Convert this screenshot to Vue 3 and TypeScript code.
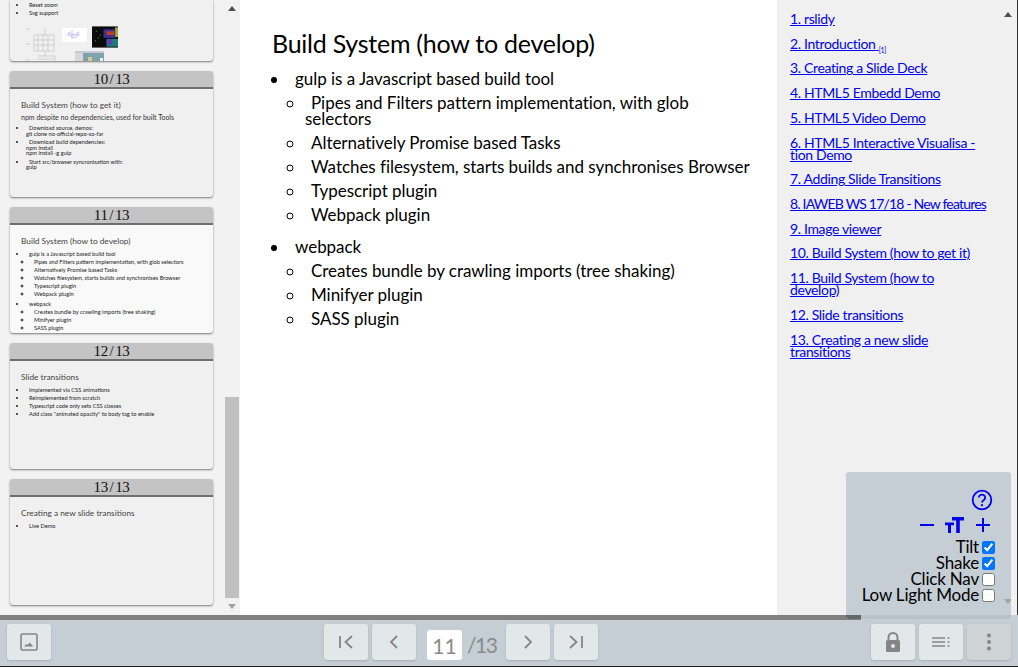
<script setup lang="ts">
const pct = (11 / 13) * 100
const toc = [
  { n: '1. rslidy' },
  { n: '2. Introduction', sup: true },
  { n: '3. Creating a Slide Deck' },
  { n: '4. HTML5 Embedd Demo' },
  { n: '5. HTML5 Video Demo' },
  { n: '6. HTML5 Interactive Visualisa - tion Demo' },
  { n: '7. Adding Slide Transitions' },
  { n: '8. IAWEB WS 17/18 - New features', cls: 'tight-link' },
  { n: '9. Image viewer' },
  { n: '10. Build System (how to get it)' },
  { n: '11. Build System (how to develop)', cls: 'short-link' },
  { n: '12. Slide transitions' },
  { n: '13. Creating a new slide transitions', cls: 'short-link' },
]
const opts = [
  { label: 'Tilt', on: true },
  { label: 'Shake', on: true },
  { label: 'Click Nav', on: false },
  { label: 'Low Light Mode', on: false },
]
</script>

<template>
  <div class="app">
    <div class="workspace">
      <aside class="thumbs">
        <div class="thumb-list">
          <div class="card first">
            <ul class="t-ul"><li>Reset zoom</li><li>Svg support</li></ul>
            <div class="pics">
              <svg class="diagram" width="32" height="36" viewBox="0 0 32 36">
                <g fill="none" stroke="#c8c8c8" stroke-width=".8">
                  <rect x="9" y="9" width="20" height="16" />
                  <path d="M13 9v16M18 9v16M23 9v16M9 14h20M9 19h20M20 2v7M20 25v5M12 30h18v6M12 33h18" />
                  <path d="M1 3h4M1 18h4M1 34h3" />
                </g>
              </svg>
              <div class="pic-col">
                <div class="pic-row">
                  <svg class="white-pic" width="25" height="14" viewBox="0 0 25 14">
                    <rect width="25" height="14" fill="#fff" />
                    <path d="M6 4l6 3 5-3-3 6-5-1zM10 2v9M4 7h14" stroke="#b4b8ee" fill="none" stroke-width=".7" />
                  </svg>
                  <svg width="26" height="22" viewBox="0 0 27 22">
                    <rect width="27" height="22" fill="#0c0c0c" />
                    <rect x="12" y="3" width="12" height="9" fill="#3a2f96" />
                    <rect x="15" y="5" width="8" height="4" fill="#b5402c" />
                    <rect x="24" y="1" width="3" height="10" fill="#a0b030" />
                    <rect x="15" y="13" width="12" height="8" fill="#1f7d78" />
                    <rect x="16" y="13" width="5" height="6" fill="#5a3fb0" />
                    <path d="M4 5h1M6 12h1M3 15h1M8 9h1" stroke="#3ec43e" />
                  </svg>
                </div>
                <svg class="last-pic" width="29" height="12" viewBox="0 0 29 12">
                  <rect width="29" height="12" fill="#7fa3ad" />
                  <rect width="29" height="2" fill="#c8c8d8" />
                  <rect y="2" width="8" height="10" fill="#d8d8d8" />
                  <rect x="13" y="6" width="4" height="5" fill="#d6c98c" />
                  <rect x="25" y="7" width="3" height="4" fill="#eee" />
                </svg>
              </div>
            </div>
          </div>

          <div class="card">
            <div class="card-head">10 / 13</div>
            <div class="card-body">
              <div class="t-h1">Build System (how to get it)</div>
              <div class="t-h2">npm despite no dependencies, used for built Tools</div>
              <ul class="t-ul tight">
                <li>Download source, demos:<br /><span class="out">git clone no-official-repo-so-far</span></li>
                <li>Download build dependencies:<br /><span class="out">npm install</span><br /><span class="out">npm install -g gulp</span></li>
                <li>Start src/browser syncronisation with:<br /><span class="out">gulp</span></li>
              </ul>
            </div>
          </div>

          <div class="card current">
            <div class="card-head">11 / 13</div>
            <div class="card-body">
              <div class="t-h1">Build System (how to develop)</div>
              <ul class="t-ul">
                <li><span class="t-lead">gulp is a Javascript based build tool</span>
                  <ul class="t-sub">
                    <li>Pipes and Filters pattern implementation, with glob selectors</li>
                    <li>Alternatively Promise based Tasks</li>
                    <li>Watches filesystem, starts builds and synchronises Browser</li>
                    <li>Typescript plugin</li>
                    <li>Webpack plugin</li>
                  </ul>
                </li>
                <li><span class="t-lead">webpack</span>
                  <ul class="t-sub">
                    <li>Creates bundle by crawling imports (tree shaking)</li>
                    <li>Minifyer plugin</li>
                    <li>SASS plugin</li>
                  </ul>
                </li>
              </ul>
            </div>
          </div>

          <div class="card">
            <div class="card-head">12 / 13</div>
            <div class="card-body">
              <div class="t-h1">Slide transitions</div>
              <ul class="t-ul">
                <li>Implemented via CSS animations</li>
                <li>Reimplemented from scratch</li>
                <li>Typescript code only sets CSS classes</li>
                <li>Add class "animated opacity" to body tag to enable</li>
              </ul>
            </div>
          </div>

          <div class="card">
            <div class="card-head">13 / 13</div>
            <div class="card-body">
              <div class="t-h1">Creating a new slide transitions</div>
              <ul class="t-ul"><li>Live Demo</li></ul>
            </div>
          </div>
        </div>
        <div class="scroll-rail">
          <span class="arrow up"></span>
          <div class="rail-space"><div class="rail-thumb"></div></div>
          <span class="arrow down"></span>
        </div>
      </aside>

      <main class="slide">
        <h1>Build System (how to develop)</h1>
        <ul class="lvl1">
          <li><span class="lead">gulp is a Javascript based build tool</span>
            <ul class="lvl2">
              <li>Pipes and Filters pattern implementation, with glob selectors</li>
              <li>Alternatively Promise based Tasks</li>
              <li>Watches filesystem, starts builds and synchronises Browser</li>
              <li>Typescript plugin</li>
              <li>Webpack plugin</li>
            </ul>
          </li>
          <li><span class="lead">webpack</span>
            <ul class="lvl2">
              <li>Creates bundle by crawling imports (tree shaking)</li>
              <li>Minifyer plugin</li>
              <li>SASS plugin</li>
            </ul>
          </li>
        </ul>
      </main>

      <nav class="toc">
        <span class="arrow up toc-up"></span>
        <a v-for="t in toc" :key="t.n" href="#" class="toc-link" :class="t.cls">{{ t.n }}<span v-if="t.sup">&nbsp;<sub>[1]</sub></span></a>
      </nav>
    </div>

    <div class="progress"><div class="progress-fill" :style="{ width: pct + '%' }"></div></div>

    <footer class="bar">
      <button class="btn">
        <svg width="20" height="20" viewBox="0 0 20 20"><rect x="2" y="2" width="16" height="16" rx="1.5" fill="none" stroke="#858585" stroke-width="1.6" /><path d="M5 14.5l2.4-2.6 1.4 1.2 1.8-2.6 3.8 4z" fill="#858585" /></svg>
      </button>
      <div class="nav">
        <button class="btn"><svg width="20" height="20" viewBox="0 0 20 20"><path d="M4 4v12M16 4l-6.500 6 6.500 6" fill="none" stroke="#858585" stroke-width="1.800" /></svg></button>
        <button class="btn"><svg width="20" height="20" viewBox="0 0 20 20"><path d="M13 4l-6 6 6 6" fill="none" stroke="#858585" stroke-width="1.800" /></svg></button>
        <div class="pager"><span class="cur">11</span><span class="total">/13</span></div>
        <button class="btn"><svg width="20" height="20" viewBox="0 0 20 20"><path d="M7 4l6 6-6 6" fill="none" stroke="#858585" stroke-width="1.800" /></svg></button>
        <button class="btn"><svg width="20" height="20" viewBox="0 0 20 20"><path d="M4 4l6.500 6L4 16M16 4v12" fill="none" stroke="#858585" stroke-width="1.800" /></svg></button>
      </div>
      <div class="tools">
        <button class="btn"><svg width="20" height="22" viewBox="0 0 20 22"><path d="M5.500 9V6.500a4.500 4.500 0 0 1 9 0V9" fill="none" stroke="#858585" stroke-width="2" /><rect x="3" y="9" width="14" height="12" rx="1.500" fill="#858585" /><circle cx="10" cy="15" r="2" fill="#e2e7ea" /></svg></button>
        <button class="btn"><svg width="20" height="20" viewBox="0 0 20 20"><path d="M1 6h13M16.500 6h2M1 10h13M16.500 10h2M1 14h13M16.500 14h2" stroke="#858585" stroke-width="1.600" /></svg></button>
        <button class="btn dim"><svg width="20" height="20" viewBox="0 0 20 20"><circle cx="10" cy="3.500" r="2" fill="#858585" /><circle cx="10" cy="10" r="2" fill="#858585" /><circle cx="10" cy="16.500" r="2" fill="#858585" /></svg></button>
      </div>
    </footer>

    <section class="settings">
      <span class="arrow down set-down"></span>
      <span class="set-edge"></span>
      <svg class="help" width="22" height="22" viewBox="0 0 22 22"><circle cx="11" cy="11" r="9.300" fill="none" stroke="#0000f0" stroke-width="1.800" /><path d="M7.800 8.600a3.200 3 0 1 1 4.800 2.600c-1 .6-1.600 1.100-1.600 2.300" fill="none" stroke="#0000f0" stroke-width="1.800" /><circle cx="11" cy="16.200" r="1.100" fill="#0000f0" /></svg>
      <div class="zoom">
        <svg width="16" height="16" viewBox="0 0 16 16"><path d="M1 8h14" stroke="#0000f0" stroke-width="2" /></svg>
        <svg width="20" height="16" viewBox="0 0 20 16"><path d="M7 0h12v3.600h-4.200V16h-3.600V3.600H7zM0 5.500h9v2.700H6V16H3V8.200H0z" fill="#0000f0" /></svg>
        <svg width="16" height="16" viewBox="0 0 16 16"><path d="M1 8h14M8 1v14" stroke="#0000f0" stroke-width="2" /></svg>
      </div>
      <label v-for="o in opts" :key="o.label" class="opt">{{ o.label }}<input type="checkbox" :checked="o.on" /></label>
    </section>
  </div>
</template>

<style>
html, body { margin: 0; padding: 0; background: #fff; }
</style>

<style scoped>
.app {
  position: relative;
  width: 1018px;
  height: 667px;
  overflow: hidden;
  display: flex;
  flex-direction: column;
  font-family: Lato, sans-serif;
  color: #000;
}
.workspace { flex: 1; display: flex; min-height: 0; }

.thumbs { width: 240px; flex: none; background: #f2f2f2; display: flex; overflow: hidden; }
.thumb-list { width: 225px; flex: none; padding-left: 10px; box-sizing: border-box; }
.card {
  width: 203px;
  height: 126px;
  margin-bottom: 10px;
  background: #f0f0f0;
  border-radius: 3px;
  box-shadow: 0 1px 2px rgba(0, 0, 0, 0.5);
  overflow: hidden;
  color: #222;
}
.card.current { background: #f9f9f9; }
.card.first { height: 61px; border-radius: 0 0 3px 3px; padding: 0 11px; box-sizing: border-box; }
.card-head {
  height: 16px;
  background: #c4c4c4;
  border-bottom: 2px solid #6e6e6e;
  text-align: center;
  font: 15px/16px "Liberation Serif", serif;
  word-spacing: -1.500px;
  letter-spacing: -0.400px;
  color: #111;
}
.card-body { padding: 11px 11px 0; }
.t-h1 { font-size: 8.300px; line-height: 11px; margin-bottom: 3px; color: #444; }
.t-h2 { font-size: 7px; line-height: 8px; margin-top: -1px; margin-bottom: 4px; color: #333; }
.t-ul { margin: 0; padding: 0 0 0 6px; font-size: 5.650px; line-height: 8px; }
.t-ul > li { text-indent: 2px; }
.t-lead { margin-left: 2px; }
.t-ul.tight { line-height: 5.700px; }
.t-ul.tight > li { margin-bottom: 2.500px; }
.out { margin-left: -1px; }
.t-sub { margin: 0 0 2px; padding: 0 0 0 5px; list-style: circle; }
.first .t-ul { padding-top: 1px; }
.pics { display: flex; gap: 5px; margin-top: 9px; padding-left: 4px; }
.diagram { flex: none; }
.pic-col { display: flex; flex-direction: column; align-items: flex-end; }
.pic-row { display: flex; align-items: flex-start; gap: 5px; }
.white-pic { margin-top: 2px; }
.last-pic { margin-right: 14px; margin-top: 3px; }

.scroll-rail { width: 14px; flex: none; display: flex; flex-direction: column; align-items: center; }
.rail-space { flex: 1; width: 100%; display: flex; flex-direction: column; justify-content: flex-end; }
.rail-thumb { height: 201px; background: #c0c0c0; }
.arrow { display: block; width: 0; height: 0; border-left: 4px solid transparent; border-right: 4px solid transparent; }
.arrow.up { border-bottom: 5px solid #505050; margin: 6px 0 4px; }
.arrow.down { border-top: 5px solid #a3a3a3; margin: 6px 0 6px; }

.slide { width: 537px; flex: none; background: #fff; padding: 28px 22px 0 33px; box-sizing: border-box; }
.slide h1 { margin: 0 0 13px -1px; font-size: 25px; letter-spacing: -0.250px; line-height: 30px; font-weight: 400; }
.lvl1 { margin: 0; padding: 0 0 0 16px; font-size: 17px; letter-spacing: -0.040px; line-height: 16px; }
.lvl1 > li { margin-bottom: 16px; }
.lead { margin-left: 6px; }
.lvl2 { margin: 0; padding: 0; list-style: circle; }
.lvl2 > li { margin: 8px 0 8px 16px; text-indent: 6px; }

.toc { position: relative; flex: 1; background: #f0f0f0; padding: 13px 20px 0 13px; display: flex; flex-direction: column; align-items: flex-start; border-right: 1px solid #333; box-sizing: border-box; }
.toc-up { position: absolute; top: 6px; right: 5px; margin: 0; border-bottom-color: #a3a3a3; }
.toc-link { color: #0000ee; font-size: 14px; letter-spacing: -0.350px; line-height: 12px; margin-bottom: 12.720px; }
.toc-link.tight-link { letter-spacing: -0.800px; white-space: nowrap; }
.toc-link.short-link { max-width: 170px; }
.toc-link sub { font-size: 7px; line-height: 0; }

.progress { height: 5px; flex: none; background: #c5ced4; }
.progress-fill { height: 100%; background: #808080; }

.bar { height: 47px; flex: none; box-sizing: border-box; background: #c5ced4; border-bottom: 1px solid #222; display: flex; align-items: flex-start; padding: 4px 7px 0; justify-content: space-between; }
.btn { width: 44px; height: 36px; border: 0; padding: 0; background: #e2e7ea; border-radius: 3px; box-shadow: 0 1px 2px rgba(0, 0, 0, 0.15); display: flex; align-items: center; justify-content: center; }
.btn.dim { background: #ced3d6; }
.nav { display: flex; gap: 4px; margin-left: 273px; margin-right: 273px; }
.tools { display: flex; gap: 4px; }
.pager { display: flex; align-items: flex-end; width: 82px; padding: 0 7px; box-sizing: border-box; }
.cur { flex: none; width: 35px; height: 30px; background: #fff; border-radius: 3px; color: #8a8a8a; font-size: 21px; line-height: 32px; text-align: center; }
.total { color: #8a8a8a; font-size: 21px; letter-spacing: -1.500px; line-height: 30px; margin-left: 5px; white-space: nowrap; }

.settings {
  position: absolute;
  left: 846px;
  top: 472px;
  width: 165px;
  height: 147px;
  box-sizing: border-box;
  padding: 17px 18px 0 0;
  background: #c5ced4;
  border-radius: 3px;
  display: flex;
  flex-direction: column;
  align-items: flex-end;
  overflow: hidden;
}
.set-edge { position: absolute; left: 0; right: 0; bottom: 0; height: 4px; background: linear-gradient(to right, #63686b 15px, #b8c2c8 15px); }
.set-down { position: absolute; right: -1px; bottom: 9px; margin: 0; }
.zoom { display: flex; align-items: center; gap: 10px; margin: 6px 2px 6px 0; }
.opt { display: flex; align-items: center; font-size: 17px; letter-spacing: -0.200px; line-height: 16px; height: 16px; margin-right: -2px; }
.opt input { width: 13px; height: 13px; margin: 0 0 0 3px; }
</style>
